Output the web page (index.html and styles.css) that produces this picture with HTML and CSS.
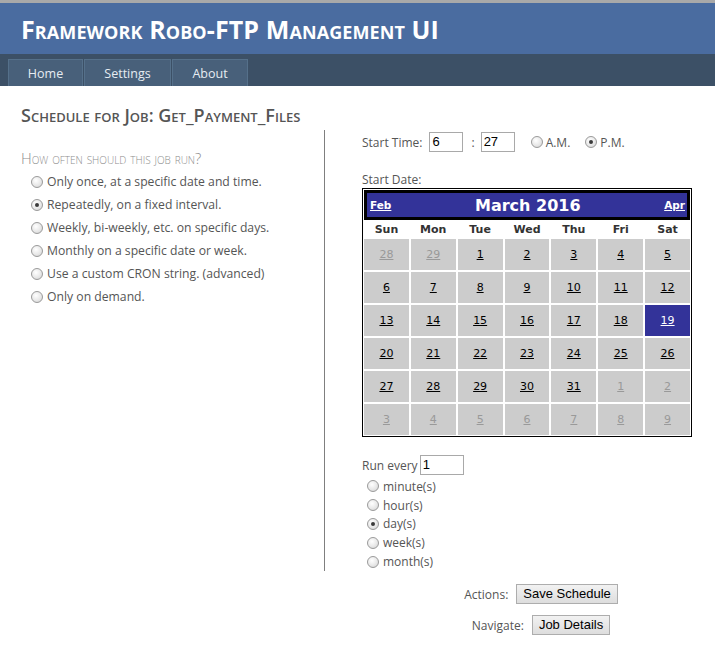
FILE: index.html
```html
<!DOCTYPE html>
<html lang="en">
<head>
<meta charset="utf-8">
<title>Framework Robo-FTP Management UI</title>
<link rel="stylesheet" href="styles.css">
</head>
<body>
<div class="topline"></div>
<header class="header">
  <h1 class="title">Framework Robo-FTP Management UI</h1>
</header>
<nav class="nav">
  <a class="tab tab-home" href="#">Home</a>
  <a class="tab tab-settings" href="#">Settings</a>
  <a class="tab tab-about" href="#">About</a>
</nav>
<main class="main">
  <section class="left">
    <h2 class="job-title">Schedule for Job: Get_Payment_Files</h2>
    <div class="question">How often should this job run?</div>
    <ul class="options">
      <li><span class="radio"></span>Only once, at a specific date and time.</li>
      <li><span class="radio checked"></span>Repeatedly, on a fixed interval.</li>
      <li><span class="radio"></span>Weekly, bi-weekly, etc. on specific days.</li>
      <li><span class="radio"></span>Monthly on a specific date or week.</li>
      <li><span class="radio"></span>Use a custom CRON string. (advanced)</li>
      <li><span class="radio"></span>Only on demand.</li>
    </ul>
  </section>
  <section class="right">
    <div class="panel">
      <div class="time-row">
        <span class="label">Start Time:</span>
        <span class="input in-hour">6</span>
        <span class="colon">:</span>
        <span class="input in-min">27</span>
        <span class="radio ampm-radio"></span><span class="ampm">A.M.</span>
        <span class="radio checked ampm-radio"></span><span class="ampm">P.M.</span>
      </div>
      <div class="date-label">Start Date:</div>
      <div class="cal">
        <div class="cal-title">
          <a class="cal-nav" href="#">Feb</a>
          <span class="cal-month">March 2016</span>
          <a class="cal-nav" href="#">Apr</a>
        </div>
        <div class="cal-days">
          <span>Sun</span><span>Mon</span><span>Tue</span><span>Wed</span><span>Thu</span><span>Fri</span><span>Sat</span>
        </div>
        <div class="cal-grid">
          <a class="d other">28</a><a class="d other">29</a><a class="d">1</a><a class="d">2</a><a class="d">3</a><a class="d">4</a><a class="d">5</a>
          <a class="d">6</a><a class="d">7</a><a class="d">8</a><a class="d">9</a><a class="d">10</a><a class="d">11</a><a class="d">12</a>
          <a class="d">13</a><a class="d">14</a><a class="d">15</a><a class="d">16</a><a class="d">17</a><a class="d">18</a><a class="d sel">19</a>
          <a class="d">20</a><a class="d">21</a><a class="d">22</a><a class="d">23</a><a class="d">24</a><a class="d">25</a><a class="d">26</a>
          <a class="d">27</a><a class="d">28</a><a class="d">29</a><a class="d">30</a><a class="d">31</a><a class="d other">1</a><a class="d other">2</a>
          <a class="d other">3</a><a class="d other">4</a><a class="d other">5</a><a class="d other">6</a><a class="d other">7</a><a class="d other">8</a><a class="d other">9</a>
        </div>
      </div>
      <div class="run-row">
        <span class="label">Run every</span>
        <span class="input in-run">1</span>
      </div>
      <ul class="units">
        <li><span class="radio"></span>minute(s)</li>
        <li><span class="radio"></span>hour(s)</li>
        <li><span class="radio checked"></span>day(s)</li>
        <li><span class="radio"></span>week(s)</li>
        <li><span class="radio"></span>month(s)</li>
      </ul>
    </div>
    <div class="actions">
      <div class="act-row"><span class="act-label">Actions:</span><button class="btn" type="button">Save Schedule</button></div>
      <div class="act-row"><span class="act-label">Navigate:</span><button class="btn" type="button">Job Details</button></div>
    </div>
  </section>
</main>
</body>
</html>
```
FILE: styles.css
```css
html, body {
  margin: 0;
  padding: 0;
  background: #ffffff;
}
body {
  font-family: "Open Sans", "Noto Sans", sans-serif;
  font-size: 12px;
  color: #555555;
}
.topline {
  height: 3px;
  background: #a9a9a9;
}
.header {
  height: 51px;
  background: #4a6ca0;
  display: flex;
  align-items: center;
}
.title {
  margin: 0 0 0 21px;
  font-size: 25px;
  font-weight: 700;
  font-variant: small-caps;
  color: #ffffff;
  line-height: 1;
  padding-top: 2px;
  letter-spacing: 0.1px;
}
.nav {
  height: 32px;
  background: #3c5066;
  box-sizing: border-box;
  padding: 5px 0 0 8px;
  display: flex;
}
.tab {
  display: flex;
  align-items: center;
  justify-content: center;
  height: 27px;
  box-sizing: border-box;
  background: #48607a;
  border: 1px solid #55708a;
  border-bottom: none;
  color: #e6ecf2;
  text-decoration: none;
  font-size: 12.5px;
  margin-right: 1px;
}
.tab-home { width: 75px; }
.tab-settings { width: 87px; }
.tab-about { width: 76px; }

.main {
  display: flex;
}
.left {
  width: 324px;
  flex: none;
  box-sizing: border-box;
  padding-left: 21px;
}
.job-title {
  margin: 19px 0 0 0;
  font-size: 18px;
  line-height: 20px;
  font-weight: 600;
  font-variant: small-caps;
  color: #555555;
}
.question {
  margin-top: 24px;
  font-size: 14.9px;
  line-height: 18px;
  font-weight: 300;
  font-variant: small-caps;
  color: #8e8e8e;
}
.options {
  list-style: none;
  margin: 3px 0 0 0;
  padding: 0 0 0 10px;
}
.options li {
  height: 23px;
  display: flex;
  align-items: center;
  color: #555555;
  font-size: 12.2px;
}
.radio {
  display: inline-block;
  width: 12px;
  height: 12px;
  box-sizing: border-box;
  border-radius: 50%;
  border: 1px solid #9a9a9a;
  background: radial-gradient(circle at 40% 35%, #ffffff 0%, #e8e8e8 55%, #cfcfcf 100%);
  margin-right: 4px;
  flex: none;
  position: relative;
}
.radio.checked::after {
  content: "";
  position: absolute;
  left: 3px;
  top: 3px;
  width: 4px;
  height: 4px;
  border-radius: 50%;
  background: #3a3a3a;
}

.right {
  flex: 1;
}
.panel {
  margin-top: 44px;
  border-left: 1px solid #7f7f7f;
  padding-left: 37px;
  height: 441px;
  box-sizing: border-box;
  padding-top: 2px;
}
.time-row {
  display: flex;
  align-items: center;
  height: 20px;
}
.time-row .label {
  margin-right: 7px;
}
.input {
  display: inline-block;
  box-sizing: border-box;
  height: 20px;
  border: 1px solid #a9a9a9;
  font-family: "Liberation Sans", Arial, sans-serif;
  font-size: 13px;
  line-height: 18px;
  padding-left: 2px;
  color: #000000;
  background: #ffffff;
}
.in-hour { width: 34px; }
.in-min { width: 34px; }
.in-run { width: 44px; }
.colon {
  margin: 0 6px 0 8px;
}
.ampm-radio {
  margin-left: 16px;
  margin-right: 3px;
}
.ampm + .ampm-radio {
  margin-left: 15px;
}
.date-label {
  margin-top: 19px;
  line-height: 17px;
}
.cal {
  width: 330px;
  box-sizing: border-box;
  border: 1px solid #000000;
  padding: 1px;
  font-family: "DejaVu Sans", Verdana, sans-serif;
}
.cal-title {
  height: 30px;
  box-sizing: border-box;
  border: 3px solid #000000;
  background: #333399;
  display: flex;
  align-items: center;
  justify-content: space-between;
  padding: 0 2px 0 3px;
}
.cal-nav {
  color: #ffffff;
  font-weight: 700;
  font-size: 10.5px;
  text-decoration: underline;
}
.cal-month {
  color: #ffffff;
  font-weight: 700;
  font-size: 16px;
}
.cal-days {
  display: grid;
  grid-template-columns: repeat(7, 1fr);
  column-gap: 2px;
  height: 18px;
  align-items: center;
  text-align: center;
  font-size: 11px;
  font-weight: 700;
  color: #333333;
}
.cal-grid {
  display: grid;
  grid-template-columns: repeat(7, 1fr);
  grid-auto-rows: 31px;
  gap: 2px;
  margin-top: 1px;
}
.d {
  background: #cccccc;
  display: flex;
  align-items: center;
  justify-content: center;
  font-size: 11px;
  color: #000000;
  text-decoration: underline;
}
.d.other {
  color: #999999;
}
.d.sel {
  background: #333399;
  color: #ffffff;
}
.run-row {
  display: flex;
  align-items: center;
  margin-top: 18px;
  height: 20px;
}
.run-row .label {
  margin-right: 2px;
}
.units {
  list-style: none;
  margin: 2px 0 0 0;
  padding: 0 0 0 5px;
}
.units li {
  height: 18.8px;
  display: flex;
  align-items: center;
}
.units .radio {
  margin-right: 4px;
}
.actions {
  margin-left: 43px;
  padding-top: 13px;
  text-align: center;
}
.act-row {
  display: flex;
  justify-content: center;
  align-items: center;
  height: 20px;
  margin-bottom: 11px;
}
.act-label {
  margin-right: 8px;
}
.btn {
  font-family: "Liberation Sans", Arial, sans-serif;
  font-size: 13px;
  color: #000000;
  height: 20px;
  padding: 0 6px;
  border: 1px solid #adadad;
  border-radius: 0;
  background: linear-gradient(#f2f2f2, #dddddd);
  line-height: 18px;
}
```
